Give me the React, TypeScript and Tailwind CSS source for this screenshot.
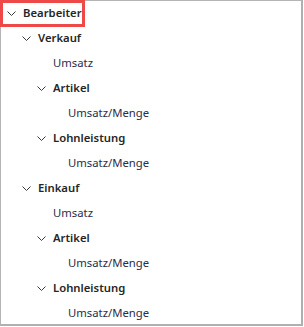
type Node = { label: string; children?: Node[] }

const TREE: Node[] = [
  {
    label: 'Bearbeiter',
    children: [
      {
        label: 'Verkauf',
        children: [
          { label: 'Umsatz' },
          { label: 'Artikel', children: [{ label: 'Umsatz/Menge' }] },
          { label: 'Lohnleistung', children: [{ label: 'Umsatz/Menge' }] },
        ],
      },
      {
        label: 'Einkauf',
        children: [
          { label: 'Umsatz' },
          { label: 'Artikel', children: [{ label: 'Umsatz/Menge' }] },
          { label: 'Lohnleistung', children: [{ label: 'Umsatz/Menge' }] },
        ],
      },
    ],
  },
]

function Chevron() {
  return (
    <svg width="9" height="5" viewBox="0 0 9 5" className="shrink-0 text-[#3a3a3a]">
      <polyline points="0.5,0.5 4.5,4.5 8.5,0.5" fill="none" stroke="currentColor" strokeWidth="1" />
    </svg>
  )
}

function TreeRow({ node }: { node: Node }) {
  const hasChildren = !!node.children
  return (
    <li>
      <div className="flex h-[25px] items-center">
        {hasChildren ? (
          <span className="flex w-4 items-center">
            <Chevron />
          </span>
        ) : (
          <span className="w-4" />
        )}
        <span
          className={
            hasChildren
              ? 'font-semibold text-[#262626]'
              : 'font-normal text-[#2a2d48]'
          }
        >
          {node.label}
        </span>
      </div>
      {hasChildren && (
        <ul className="pl-[15px]">
          {node.children!.map((child, i) => (
            <TreeRow key={i} node={child} />
          ))}
        </ul>
      )}
    </li>
  )
}

export default function App() {
  return (
    <div className="relative h-[327px] w-[304px] bg-white font-['Segoe_UI','Noto_Sans',sans-serif] text-[11.3px]">
      <div className="h-[326px] w-[303px] border-t border-l border-r-2 border-b-2 border-t-[#b4b4b4] border-l-[#b4b4b4] border-r-[#b0b0b0] border-b-[#b0b0b0] bg-white">
        <ul className="pl-[6px]">
          {TREE.map((n, i) => (
            <TreeRow key={i} node={n} />
          ))}
        </ul>
      </div>
      <div className="pointer-events-none absolute left-0 top-0 h-[27px] w-[85px] border-[3px] border-[#ee4848]" />
    </div>
  )
}
